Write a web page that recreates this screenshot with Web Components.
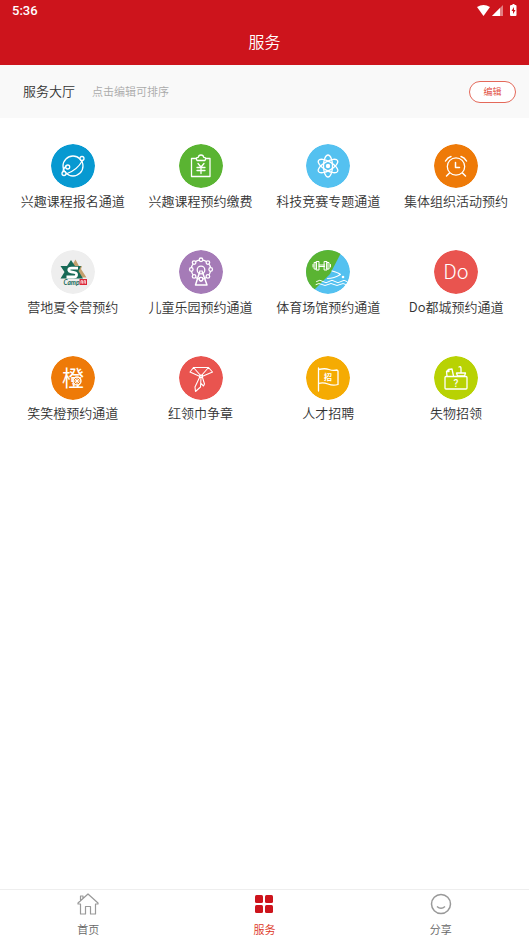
<!DOCTYPE html>
<html lang="zh-CN">
<head>
<meta charset="utf-8">
<meta name="viewport" content="width=device-width, initial-scale=1">
<title>服务</title>
<style>
html, body { margin: 0; height: 100%; background: #fff; }
body { font-family: "Noto Sans CJK SC", sans-serif; font-weight: 350; color: #333; }
</style>
</head>
<body>
<service-app></service-app>

<template id="status-bar-t">
<style>
:host { display: flex; align-items: center; justify-content: space-between; height: 22px; padding: 0 12px; color: #fff; font-family: Roboto, sans-serif; font-size: 13px; font-weight: 500; line-height: 22px; }
svg { display: block; width: 40px; height: 14px; }
</style>
<slot></slot>
<svg viewBox="0 0 40 14" aria-hidden="true">
<path d="M0 3Q6.500-1 13 3L6.500 12Z" fill="#fff"/>
<path d="M15 12L26 1V12Z" fill="#fff" fill-opacity=".45"/>
<path d="M15 12L23 4V12Z" fill="#fff"/>
<path d="M34.500 1H35.500V0H37.500V1H38.500Q39.500 1 39.500 2V11Q39.500 12 38.500 12H34Q33 12 33 11V2Q33 1 34.500 1Z" fill="#fff"/>
<path d="M37 3L34.500 7H36V10L38.500 6H37Z" fill="#cd141c"/>
</svg>
</template>

<template id="title-bar-t">
<style>
:host { display: block; }
h1 { margin: 0; height: 43px; color: #fff; text-align: center; font-size: 16px; font-weight: inherit; line-height: 38px; }
</style>
<h1><slot></slot></h1>
</template>

<template id="section-bar-t">
<style>
:host { display: flex; align-items: center; height: 53px; padding: 0 13px 0 23px; background: #f9f9f9; }
h2, p { margin: 0; padding-bottom: 2px; line-height: 20px; }
h2 { margin-right: 17px; font-size: 13px; font-weight: inherit; }
p { flex: 1; color: #aaa; font-size: 11px; }
button { box-sizing: border-box; width: 47px; height: 22px; padding: 0; border: 1px solid #e4695a; border-radius: 11px; background: #fff; color: #e04432; font: inherit; font-size: 9px; line-height: 20px; }
</style>
<h2><slot></slot></h2>
<p><slot name="hint"></slot></p>
<button type="button"><slot name="action"></slot></button>
</template>

<template id="service-tile-t">
<style>
:host { display: block; min-width: 0; }
a { display: flex; flex-direction: column; align-items: center; gap: 3px; color: inherit; text-decoration: none; }
svg { display: block; width: 44px; height: 44px; border-radius: 50%; fill: none; stroke: #fff; stroke-width: 1.300; stroke-linecap: round; stroke-linejoin: round; }
span { font-size: 13px; line-height: 20px; white-space: nowrap; }
</style>
<a href="#"><svg viewBox="0 0 44 44" aria-hidden="true"></svg><span><slot></slot></span></a>
</template>

<template id="service-grid-t">
<style>
:host { display: grid; grid-template-columns: repeat(4, 1fr); gap: 39px 0; padding: 26px 9px; }
</style>
<slot></slot>
</template>

<template id="tab-item-t">
<style>
:host { display: block; flex: 1; color: #666; }
:host([active]) { color: #dd3525; }
a { display: flex; flex-direction: column; align-items: center; gap: 3px; padding: 2px 0 3px; color: inherit; text-decoration: none; font-size: 11px; line-height: 20px; }
svg { display: block; width: 24px; height: 24px; fill: none; stroke: #999; stroke-width: 1.200; stroke-linejoin: round; }
</style>
<a href="#"><svg viewBox="0 0 24 24" aria-hidden="true"></svg><slot></slot></a>
</template>

<template id="tab-bar-t">
<style>
:host { display: block; border-top: 1px solid #eee; background: #fff; }
nav { display: flex; }
</style>
<nav aria-label="主导航"><slot></slot></nav>
</template>

<template id="service-app-t">
<style>
:host { display: flex; flex-direction: column; min-height: 100vh; }
header { background: #cd141c; }
main { flex: 1; }
</style>
<header>
<status-bar>5:36</status-bar>
<title-bar>服务</title-bar>
</header>
<main>
<section-bar>服务大厅<span slot="hint">点击编辑可排序</span><span slot="action">编辑</span></section-bar>
<service-grid>
<service-tile icon="planet">兴趣课程报名通道</service-tile>
<service-tile icon="payment">兴趣课程预约缴费</service-tile>
<service-tile icon="atom">科技竞赛专题通道</service-tile>
<service-tile icon="alarm">集体组织活动预约</service-tile>
<service-tile icon="camp">营地夏令营预约</service-tile>
<service-tile icon="wheel">儿童乐园预约通道</service-tile>
<service-tile icon="sport">体育场馆预约通道</service-tile>
<service-tile icon="docity">Do都城预约通道</service-tile>
<service-tile icon="orange">笑笑橙预约通道</service-tile>
<service-tile icon="scarf">红领巾争章</service-tile>
<service-tile icon="recruit">人才招聘</service-tile>
<service-tile icon="lost">失物招领</service-tile>
</service-grid>
</main>
<tab-bar>
<tab-item icon="home">首页</tab-item>
<tab-item icon="apps" active>服务</tab-item>
<tab-item icon="smile">分享</tab-item>
</tab-bar>
</template>

<script>
const disc = (fill) => `<circle cx="22" cy="22" r="22" fill="${fill}" stroke="none"/>`;
const cabins = Array.from({ length: 8 }, (_, i) => {
  const a = i * Math.PI / 4;
  return `<circle cx="${(22 + 9.7 * Math.cos(a)).toFixed(1)}" cy="${(19.5 + 9.7 * Math.sin(a)).toFixed(1)}" r="1.8" fill="#a57bb7"/>`;
}).join('');
const ICONS = {
  planet: disc('#0799d1') + `<circle cx="22" cy="22" r="10"/><path d="M15 30Q26 26.500 31.500 16.500M12 27.500Q12 25 15 22"/><circle cx="31" cy="14.500" r="2" fill="#0799d1"/><circle cx="13" cy="29.500" r="2" fill="#0799d1"/><circle cx="16.700" cy="23" r="2"/>`,
  payment: disc('#5ab432') + `<path d="M17 14.500H12.500V32.500H31V14.500H27"/><path d="M18 16.500Q16.300 13.300 19.300 13.300Q19.500 11 22 11T24.700 13.300Q27.700 13.300 26 16.500Z"/><path d="M19 19.500L22 23L25 19.500M22 23V29.500M18 23.500H26M18 26.500H26"/>`,
  atom: disc('#54c1f0') + `<ellipse cx="22" cy="22" rx="4.500" ry="11"/><ellipse cx="22" cy="22" rx="4.500" ry="11" transform="rotate(60 22 22)"/><ellipse cx="22" cy="22" rx="4.500" ry="11" transform="rotate(-60 22 22)"/><circle cx="22" cy="22" r="2.200" fill="#fff" stroke="none"/>`,
  alarm: disc('#ee7a08') + `<circle cx="22" cy="22.500" r="8.700"/><path d="M21.500 18.500V23.500H25.500M11.500 17Q13.500 13.500 17 12.500M32.500 17Q30.500 13.500 27 12.500M15.500 29L12.500 32M28.500 29L31.500 32" stroke-width="1.500"/>`,
  camp: disc('#eee') + `<g stroke="none"><path d="M20 17L24.500 9.500L28 16H31L30 19L35.500 27.500H24Z" fill="#c4a06d"/><path d="M9.500 16H16L20 10L24 16H30L27.500 21L32 28.500H9.500L13.500 22Z" fill="#176a57"/></g><path d="M27 18.200H20.500Q17.500 18.200 17.800 20.200Q18 21.500 20 21.800L23.500 22.500Q26 23 25.500 25.300Q25.200 27 22.500 27H15.500" stroke-width="2.800" stroke-linecap="butt"/><rect x="12" y="29" width="17" height="7" fill="#eee" stroke="none"/><text x="12.500" y="34.500" font-family="Lato,sans-serif" font-size="6.500" font-style="italic" font-weight="700" fill="#176a57" stroke="none">Camp</text><rect x="28.500" y="29" width="7.500" height="6" fill="#dd2637" stroke="none"/><path d="M30 33.500V30.500H31.500V33.500M33 33.500V30.500H34.500V33.500M30 32H31.500M33 32H34.500" stroke-width=".6"/>`,
  wheel: disc('#a57bb7') + `<circle cx="22" cy="19.500" r="9.700"/>${cabins}<circle cx="22" cy="20" r="3.800"/><path d="M21 21L16.500 35H28L23 21" stroke-width="1.500"/><circle cx="22" cy="29.200" r="1.800" fill="#a57bb7"/>`,
  sport: disc('#54c1f0') + `<path d="M0 0H36.500L24 24L4 44H0Z" fill="#5ab432" stroke="none"/><path d="M13 15H18.500M13 16.500H18.500" stroke-width="1"/><path d="M8.500 12.500H10.500V19H8.500ZM10.500 11.500H13V20H10.500ZM18.500 11.500H21V20H18.500ZM21 12.500H23V19H21ZM7 14.500V17M24.500 14.500V17" stroke-width="1"/><path d="M26 21Q32 22.500 34.500 24.500Q28 28.500 21.500 28.500" stroke-width="1.100"/><circle cx="37" cy="27" r="1.300" fill="#fff" stroke="none"/><path d="M10.500 31.500Q14 29 17 31.500T23 31.500T29 31.500T35 31.500T41 31.500M10 34.500Q13 32.500 16 34.500T22 34.500T28 34.500T34 34.500T40 34.500" stroke-width="1"/>`,
  docity: disc('#e9544f') + `<text x="22" y="29" text-anchor="middle" font-family="Noto Sans CJK SC,sans-serif" font-size="20" font-weight="300" fill="#fff" stroke="none">Do</text>`,
  orange: disc('#ee7a08') + `<text x="22" y="30" text-anchor="middle" font-family="Noto Sans CJK SC,sans-serif" font-size="22" font-weight="400" fill="#fff" stroke="none">橙</text><circle cx="26" cy="25" r="4" fill="#ee7a08"/><path d="M22.500 25H29.500M26 21.500V28.500M23.500 22.500L28.500 27.500M28.500 22.500L23.500 27.500" stroke-width=".9"/>`,
  scarf: disc('#e9544f') + `<path d="M22 20L14.500 11.500H29.500L22 20M14.500 11.500L11 16L21 20.500M29.500 11.500L33.500 16L23 20.500M21 19H23.500V21.500H20.500ZM20.500 21.500L16 31L16.500 35.500L21.500 31L22 22M23.500 21.500L25.500 28L24.500 30L22 27.500" stroke-width="1.100"/>`,
  recruit: disc('#f5ab03') + `<path d="M12.500 12V35M12.500 13.500Q19 12 23 13.500T31 14L32 15V28.500Q27 30 22 28T12.500 27.500"/><text x="22" y="24" text-anchor="middle" font-family="Noto Sans CJK SC,sans-serif" font-size="8" font-weight="700" fill="#fff" stroke="none">招</text>`,
  lost: disc('#b8d203') + `<rect x="11" y="20.500" width="22" height="12.500" rx="1"/><path d="M13 20L12.500 15.500L14.500 13.500L18 13L19.500 20M13 15.500H15V13.500M22.500 17H31.500L30.500 20H23.500ZM27 17V12.500Q27 10 25 11"/><text x="22" y="30.500" text-anchor="middle" font-family="Roboto,sans-serif" font-size="10" font-weight="500" fill="#fff" stroke="none">?</text>`,
  home: `<path d="M4.500 9V4H7V6.500L12 2L22 11V12H19.500V22H14.500V14.500H9.500V22H4.500V12H2V11L7 6.500"/>`,
  apps: `<g fill="#cd141c" stroke="none"><rect x="3" y="3" width="8" height="8" rx="1.500"/><rect x="13" y="3" width="8" height="8" rx="1.500"/><rect x="3" y="13" width="8" height="8" rx="1.500"/><rect x="13" y="13" width="8" height="8" rx="1.500"/></g>`,
  smile: `<circle cx="12" cy="12" r="9.500" stroke-width="1.500"/><path d="M8 14.500Q12 18 16 14.500" stroke-width="1.500"/>`
};

class TemplateElement extends HTMLElement {
  constructor() {
    super();
    const template = document.getElementById(`${this.localName}-t`);
    this.attachShadow({ mode: 'open' }).append(template.content.cloneNode(true));
  }
}
class IconElement extends TemplateElement {
  connectedCallback() {
    this.shadowRoot.querySelector('svg').innerHTML = ICONS[this.getAttribute('icon')] || '';
  }
}
customElements.define('status-bar', class extends TemplateElement {});
customElements.define('title-bar', class extends TemplateElement {});
customElements.define('section-bar', class extends TemplateElement {});
customElements.define('service-tile', class extends IconElement {});
customElements.define('service-grid', class extends TemplateElement {});
customElements.define('tab-item', class extends IconElement {
  connectedCallback() {
    super.connectedCallback();
    if (this.hasAttribute('active')) this.shadowRoot.querySelector('a').setAttribute('aria-current', 'page');
  }
});
customElements.define('tab-bar', class extends TemplateElement {});
customElements.define('service-app', class extends TemplateElement {});
</script>
</body>
</html>
